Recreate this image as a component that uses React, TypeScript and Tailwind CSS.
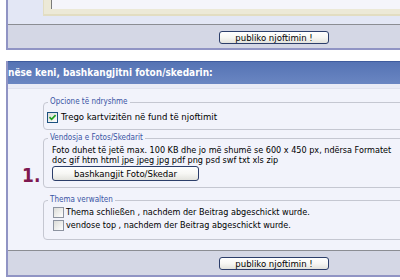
import React from "react";

function Check({ checked }: { checked?: boolean }) {
  return (
    <span
      className={
        checked
          ? "inline-flex h-[11px] w-[11px] shrink-0 items-center justify-center border border-[#1c5180] bg-linear-to-br from-[#dcdcd7] to-white"
          : "inline-flex h-[11px] w-[11px] shrink-0 items-center justify-center border border-[#8d93a0] bg-linear-to-br from-[#dcdcd7] to-white"
      }
    >
      {checked && (
        <svg width="9" height="9" viewBox="0 0 9 9">
          <path d="M1.5 4.2 L3.6 6.3 L7.6 2.2" fill="none" stroke="#21a121" strokeWidth="1.7" />
        </svg>
      )}
    </span>
  );
}

function XpButton({ children, w, h }: { children: React.ReactNode; w: string; h: string }) {
  return (
    <button
      className={`${w} ${h} flex items-center justify-center rounded-[3px] border border-[#2c3e6a] bg-linear-to-b from-white via-[#f7f7f4] to-[#e3e3dd] text-[9.5px] leading-[10px] text-black`}
    >
      {children}
    </button>
  );
}

export default function App() {
  return (
    <div className="h-[280px] w-[400px] overflow-hidden bg-white font-['DejaVu_Sans_Condensed','DejaVu_Sans',sans-serif] font-stretch-condensed text-[9.5px] leading-[12px] text-black">
      <div className="w-[430px] pl-[6px]">
        {/* top panel (partial) */}
        <div className="border-b-2 border-l-2 border-[#9094c4]">
          <div className="flex h-[24px] bg-[#e3e7f5]">
            <div className="w-[35px] shrink-0" />
            <div className="h-[16px] flex-1 border-b-2 border-l border-[#e2ddc2] bg-[#ece9d7] pl-[7px]">
              <div className="h-[9px] border-l border-[#7a7a7a] bg-[#f5f5fb]" />
            </div>
          </div>
          <div className="flex h-[24px] items-start border-t border-[#8b8d93] bg-[#d4d7e5] pl-[211px] pt-[6px]">
            <XpButton w="w-[110px]" h="h-[13px]">publiko njoftimin !</XpButton>
          </div>
        </div>

        {/* attachment panel */}
        <div className="mt-[11px] border-b-2 border-l-2 border-[#9094c4]">
          <div className="flex h-[23px] items-center border-t border-[#3f5c9e] bg-linear-to-b from-[#5573b4] to-[#6a86c2] text-[10px] font-bold text-white">
            nëse keni, bashkangjitni foton/skedarin:
          </div>
          <div className="h-[166px] bg-[#f2f3fb]">
            <div className="h-[5px] border-b border-[#e0e2ee] bg-[#e9ebf6]" />

            <div className="mt-[8px] flex">
              <div className="w-[35px] shrink-0" />
              <fieldset className="min-w-0 flex-1 rounded-[4px] border border-[#c5c7d1] pb-[6px] pt-[4px]">
                <legend className="ml-[4px] px-[2px] text-[8px] leading-[10px] text-[#3953a4]">Opcione të ndryshme</legend>
                <div className="flex h-[12px] items-center gap-[3px] pl-[3px] text-[9.5px] leading-[12px]">
                  <Check checked />
                  <span>Trego kartvizitën në fund të njoftimit</span>
                </div>
              </fieldset>
            </div>

            <div className="mt-[3px] flex">
              <div className="flex w-[35px] shrink-0 items-end pb-[2px] pl-[14px]">
                <span className="text-[19px] font-bold leading-[22px] text-[#7e1850]">1.</span>
              </div>
              <fieldset className="min-w-0 flex-1 rounded-[4px] border border-[#c5c7d1] pb-[6px] pl-[8px] pt-[2px]">
                <legend className="-ml-[4px] px-[2px] text-[8px] leading-[10px] text-[#3953a4]">Vendosja e Fotos/Skedarit</legend>
                <div className="whitespace-nowrap text-[9px] leading-[10px]">
                  Foto duhet të jetë max. 100 KB dhe jo më shumë se 600 x 450 px, ndërsa Formatet
                </div>
                <div className="whitespace-nowrap text-[9px] leading-[10px]">
                  doc gif htm html jpe jpeg jpg pdf png psd swf txt xls zip
                </div>
                <div className="mt-[1px] flex">
                  <XpButton w="w-[147px]" h="h-[15px]">bashkangjit Foto/Skedar</XpButton>
                </div>
              </fieldset>
            </div>

            <div className="mt-[7px] flex">
              <div className="w-[35px] shrink-0" />
              <fieldset className="min-w-0 flex-1 rounded-[4px] border border-[#c5c7d1] pb-[7px] pl-[9px] pt-[1px]">
                <legend className="-ml-[5px] px-[2px] text-[8px] leading-[10px] text-[#3953a4]">Thema verwalten</legend>
                <div className="flex h-[13px] items-center gap-[2px] text-[9px] leading-[13px]">
                  <Check />
                  <span>Thema schließen , nachdem der Beitrag abgeschickt wurde.</span>
                </div>
                <div className="flex h-[13px] items-center gap-[2px] text-[9px] leading-[13px]">
                  <Check />
                  <span>vendose top , nachdem der Beitrag abgeschickt wurde.</span>
                </div>
              </fieldset>
            </div>
          </div>
          <div className="flex h-[25px] items-start border-t border-[#8b8d93] bg-[#d4d7e5] pl-[211px] pt-[6px]">
            <XpButton w="w-[110px]" h="h-[13px]">publiko njoftimin !</XpButton>
          </div>
        </div>
      </div>
    </div>
  );
}
